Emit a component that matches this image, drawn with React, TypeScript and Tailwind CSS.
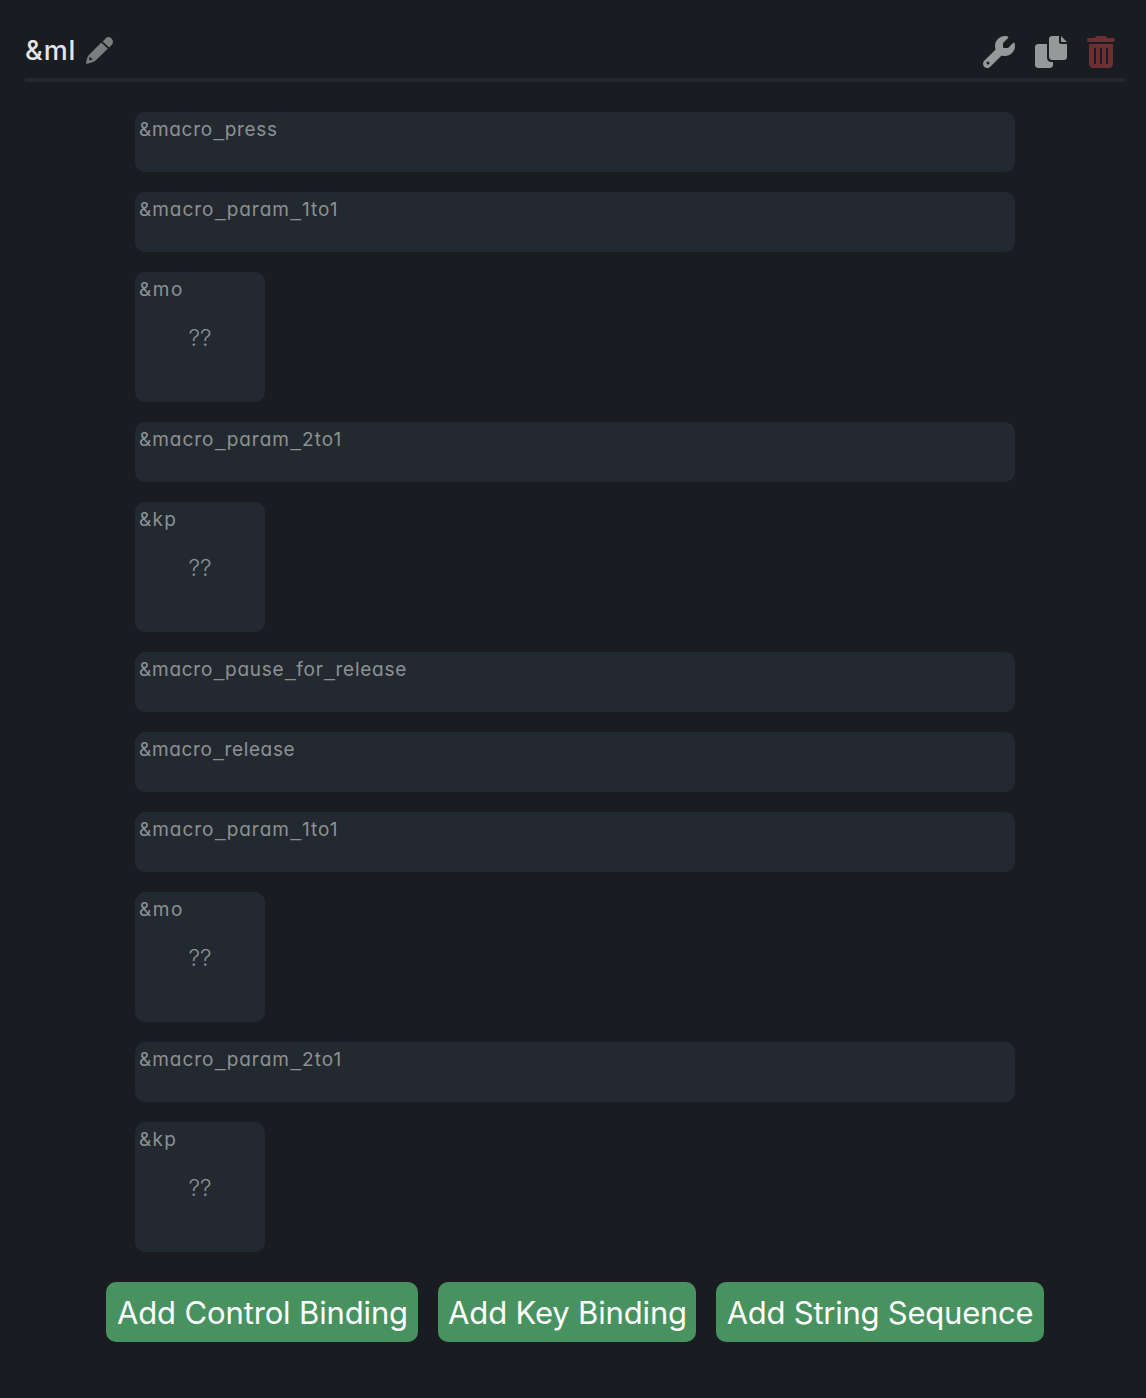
import { Fragment } from "react";
import { FaTrashCan, FaWrench } from "react-icons/fa6";

type Step = { name: string; spacing: string; key?: boolean };

const steps: Step[] = [
  { name: "&macro_press", spacing: "tracking-[0.7px]" },
  { name: "&macro_param_1to1", spacing: "tracking-[0.98px]" },
  { name: "&mo", spacing: "tracking-[1.6px]", key: true },
  { name: "&macro_param_2to1", spacing: "tracking-[0.98px]" },
  { name: "&kp", spacing: "tracking-[1.3px]", key: true },
  { name: "&macro_pause_for_release", spacing: "tracking-[0.75px]" },
  { name: "&macro_release", spacing: "tracking-[0.66px]" },
  { name: "&macro_param_1to1", spacing: "tracking-[0.98px]" },
  { name: "&mo", spacing: "tracking-[1.6px]", key: true },
  { name: "&macro_param_2to1", spacing: "tracking-[0.98px]" },
  { name: "&kp", spacing: "tracking-[1.3px]", key: true },
];

const actions = [
  { label: "Add Control Binding", style: "w-[312px] pl-[7px] tracking-[-0.14px]" },
  { label: "Add Key Binding", style: "w-[258px] pl-[7px] tracking-[-0.16px]" },
  { label: "Add String Sequence", style: "w-[328px] pl-[6px] tracking-[-0.24px]" },
];

function CopyIcon() {
  return (
    <svg viewBox="0 0 512 512" className="size-8" fill="currentColor">
      <path d="M384 96V0H272c-26.51 0-48 21.49-48 48v288c0 26.51 21.49 48 48 48h192c26.51 0 48-21.49 48-48V128h-95.1C398.4 128 384 113.6 384 96zM416 0v96h96L416 0zM192 352V128H48c-26.51 0-48 21.49-48 48v288c0 26.51 21.49 48 48 48h192c26.51 0 48-21.49 48-48v-48h-32C220.7 416 192 387.3 192 352z" />
    </svg>
  );
}

function PencilIcon() {
  return (
    <svg viewBox="0 0 81 81" className="mt-[12.5px] h-[27px] w-[27px] text-[#7c7d7f]" fill="currentColor">
      <path d="M50 13.5L56 7.2C63-1.5 71-1.5 77 5C82.500 11 82 19 76.500 24.500L69.500 31.500z" />
      <path
        fillRule="evenodd"
        d="M46 16.500L65.500 35.500L28 71.500C22 76 12 78.500 3 80C1 80.300 0 79 .3 77C1.500 69 3.500 60 8 54.500zM10 60.500L9.500 67L11.500 70.500L20 67.500L21.500 65L15.500 65.500L14 61z"
      />
    </svg>
  );
}

function BindingName({ name }: { name: string }) {
  return name.split("_").map((part, i) => (
    <Fragment key={i}>
      {i > 0 && <span className="ml-[0.6px] font-['Liberation_Sans',sans-serif]">_</span>}
      {part}
    </Fragment>
  ));
}

export default function App() {
  return (
    <main className="h-[1398px] w-[1146px] overflow-hidden bg-[#191c20] pt-6 font-['Inter',sans-serif]">
      <header className="mr-[21px] ml-[25px] flex h-[58px] items-start justify-between border-b-4 border-[#222930] pr-[10px]">
        <div className="flex items-start">
          <h1 className="w-[61px] pt-[9px] text-[27px] leading-9 font-medium tracking-[1px] whitespace-nowrap text-[#e4e4e4]">
            &amp;ml
          </h1>
          <PencilIcon />
        </div>
        <div className="flex pt-3 text-[#96989a]">
          <FaWrench className="size-8" />
          <span className="ml-5">
            <CopyIcon />
          </span>
          <FaTrashCan className="ml-5 h-8 w-7 text-[#6e2f34]" />
        </div>
      </header>
      <ul className="mt-[30px] ml-[135px] flex w-[880px] flex-col gap-5 text-[#8e9192]">
        {steps.map((s, i) => (
          <li
            key={i}
            className={
              s.key
                ? "h-[130px] w-[130px] rounded-[10px] bg-[#222930] px-1 pt-[5px]"
                : "h-[60px] rounded-[10px] bg-[#222930] px-1 pt-[5px]"
            }
          >
            <div className="h-[26px] text-[19px] leading-[26px] font-normal [font-feature-settings:'cv11']">
              <span className={s.spacing}>
                <BindingName name={s.name} />
              </span>
            </div>
            {s.key && (
              <div className="mt-[19px] text-center text-[23px] leading-8 font-light">??</div>
            )}
          </li>
        ))}
      </ul>
      <div className="mt-[30px] ml-[106px] flex gap-5">
        {actions.map((a) => (
          <button
            key={a.label}
            className={`${a.style} h-[60px] rounded-[10px] bg-[#47925f] pt-[3px] pr-[6px] text-center text-[31px] font-normal whitespace-nowrap text-white`}
          >
            {a.label}
          </button>
        ))}
      </div>
    </main>
  );
}
